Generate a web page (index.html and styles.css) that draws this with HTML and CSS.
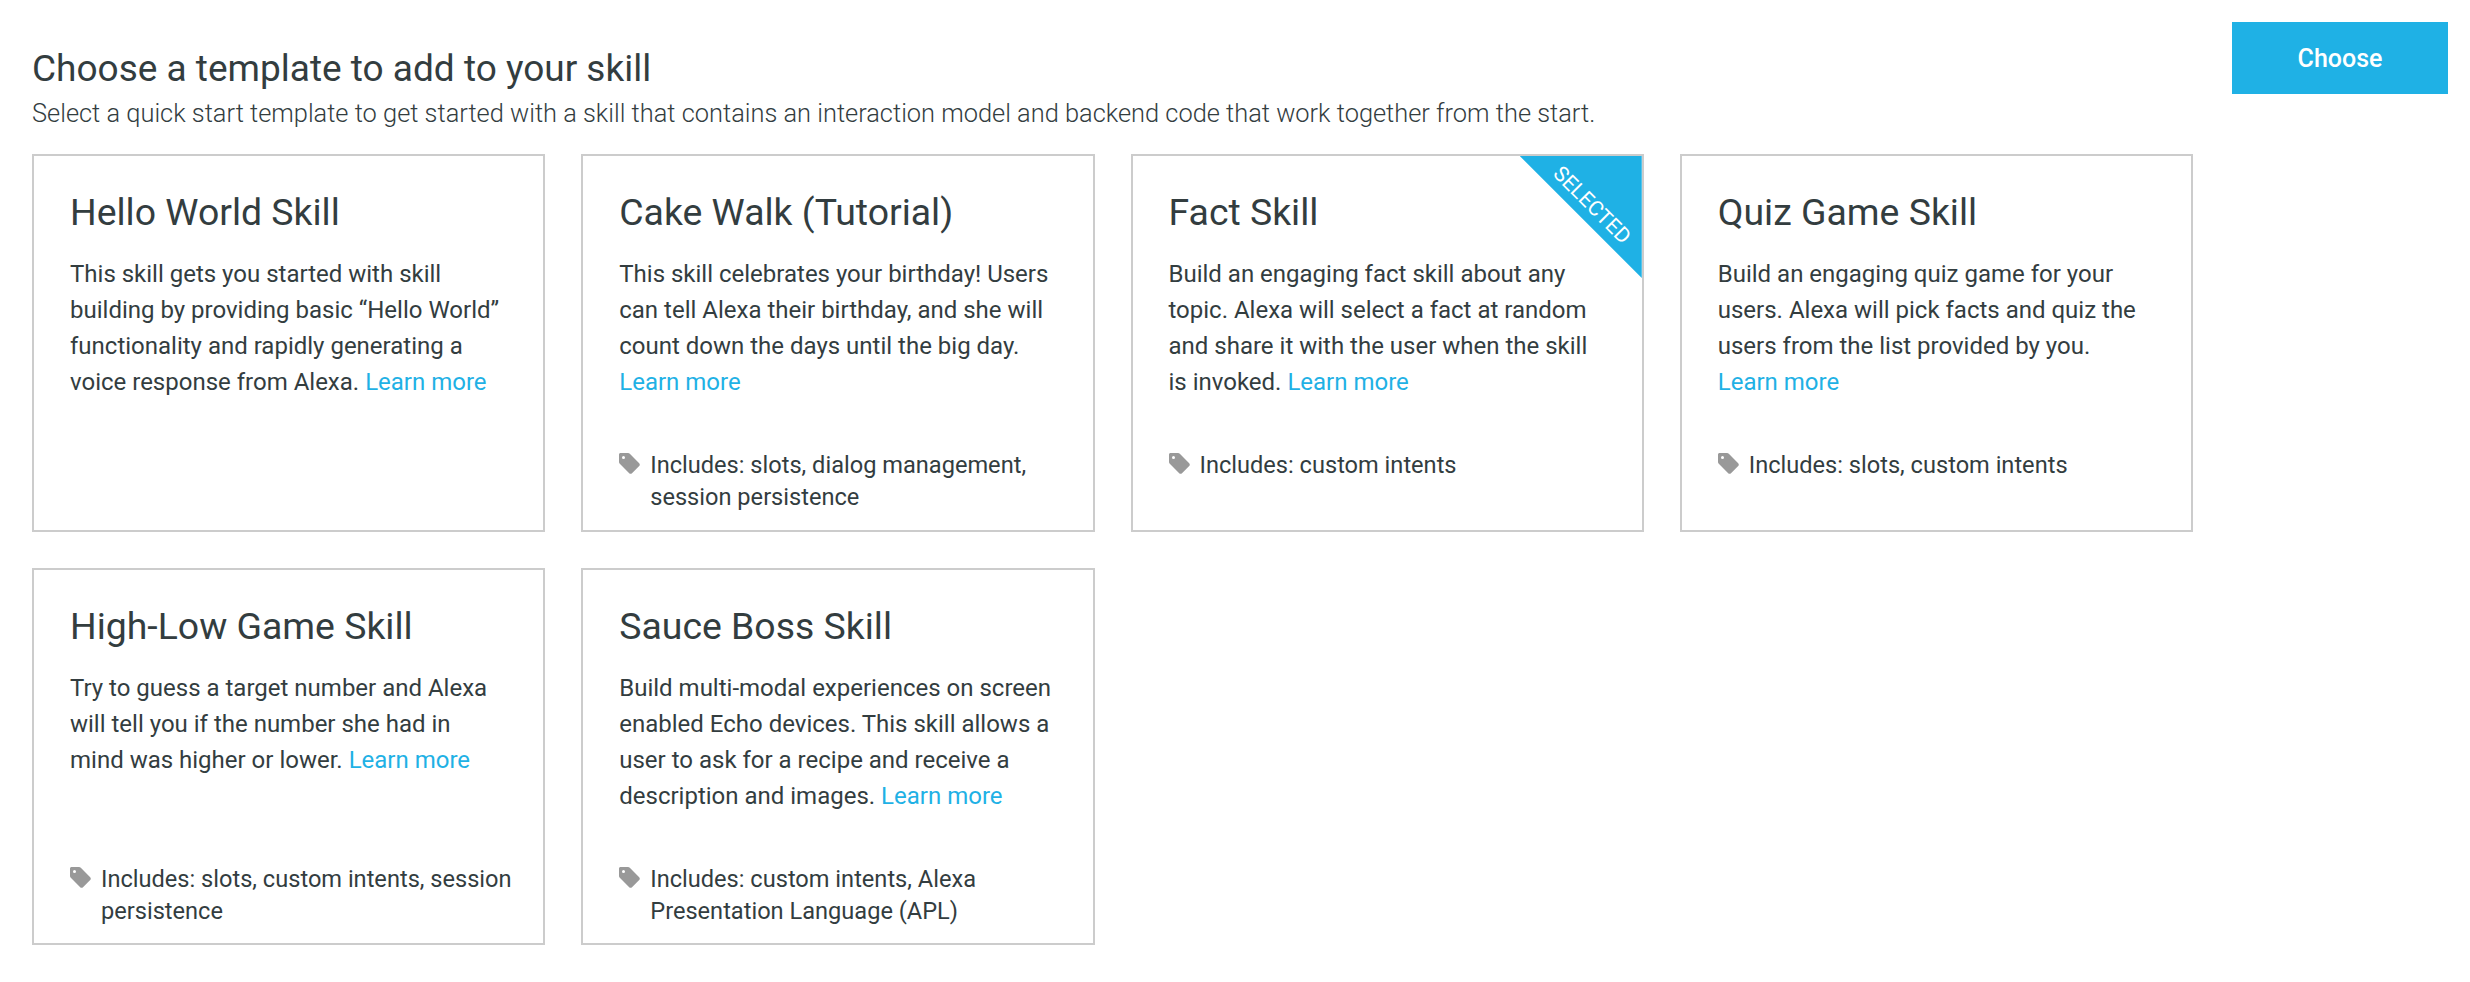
FILE: index.html
```html
<!DOCTYPE html>
<html lang="en">
<head>
    <meta charset="UTF-8">
    <title>Choose a template</title>
    <link rel="stylesheet" href="styles.css">
</head>
<body>
    <div class="page">
        <div class="content">
            <h2 class="page-title">Choose a template to add to your skill</h2>
            <p class="page-sub">Select a quick start template to get started with a skill that contains an interaction model and backend code that work together from the start.</p>

            <div class="cards">
                <div class="card">
                    <h3 class="card-title">Hello World Skill</h3>
                    <p class="card-text">This skill gets you started with skill building by providing basic “Hello World” functionality and rapidly generating a voice response from Alexa. <a href="#" class="learn">Learn more</a></p>
                </div>

                <div class="card">
                    <h3 class="card-title">Cake Walk (Tutorial)</h3>
                    <p class="card-text">This skill celebrates your birthday! Users can tell Alexa their birthday, and she will count down the days until the big day. <a href="#" class="learn">Learn more</a></p>
                    <div class="includes">
                        <svg class="tag" viewBox="0 0 21 21"><path d="M1.500 0H9c.7 0 1.300.3 1.800.8l9.400 9.400c.8.8.8 2 0 2.800l-7.200 7.200c-.8.8-2 .8-2.800 0L.8 10.800C.3 10.300 0 9.700 0 9V1.500C0 .7.7 0 1.500 0zM4.500 3A1.500 1.500 0 1 0 4.500 6 1.500 1.500 0 1 0 4.500 3z" fill-rule="evenodd"/></svg>
                        <span>Includes: slots, dialog management, session persistence</span>
                    </div>
                </div>

                <div class="card selected">
                    <div class="ribbon"><span class="ribbon-text">SELECTED</span></div>
                    <h3 class="card-title">Fact Skill</h3>
                    <p class="card-text">Build an engaging fact skill about any topic. Alexa will select a fact at random and share it with the user when the skill is invoked. <a href="#" class="learn">Learn more</a></p>
                    <div class="includes">
                        <svg class="tag" viewBox="0 0 21 21"><path d="M1.500 0H9c.7 0 1.300.3 1.800.8l9.400 9.400c.8.8.8 2 0 2.800l-7.200 7.200c-.8.8-2 .8-2.800 0L.8 10.800C.3 10.300 0 9.700 0 9V1.500C0 .7.7 0 1.500 0zM4.500 3A1.500 1.500 0 1 0 4.500 6 1.500 1.500 0 1 0 4.500 3z" fill-rule="evenodd"/></svg>
                        <span>Includes: custom intents</span>
                    </div>
                </div>

                <div class="card">
                    <h3 class="card-title">Quiz Game Skill</h3>
                    <p class="card-text">Build an engaging quiz game for your users. Alexa will pick facts and quiz the users from the list provided by you. <a href="#" class="learn">Learn more</a></p>
                    <div class="includes">
                        <svg class="tag" viewBox="0 0 21 21"><path d="M1.500 0H9c.7 0 1.300.3 1.800.8l9.400 9.400c.8.8.8 2 0 2.800l-7.200 7.200c-.8.8-2 .8-2.800 0L.8 10.800C.3 10.300 0 9.700 0 9V1.500C0 .7.7 0 1.500 0zM4.500 3A1.500 1.500 0 1 0 4.500 6 1.500 1.500 0 1 0 4.500 3z" fill-rule="evenodd"/></svg>
                        <span>Includes: slots, custom intents</span>
                    </div>
                </div>

                <div class="card">
                    <h3 class="card-title">High-Low Game Skill</h3>
                    <p class="card-text">Try to guess a target number and Alexa will tell you if the number she had in mind was higher or lower. <a href="#" class="learn">Learn more</a></p>
                    <div class="includes">
                        <svg class="tag" viewBox="0 0 21 21"><path d="M1.500 0H9c.7 0 1.300.3 1.800.8l9.400 9.400c.8.8.8 2 0 2.800l-7.200 7.200c-.8.8-2 .8-2.800 0L.8 10.800C.3 10.300 0 9.700 0 9V1.500C0 .7.7 0 1.500 0zM4.500 3A1.500 1.500 0 1 0 4.500 6 1.500 1.500 0 1 0 4.500 3z" fill-rule="evenodd"/></svg>
                        <span>Includes: slots, custom intents, session persistence</span>
                    </div>
                </div>

                <div class="card">
                    <h3 class="card-title">Sauce Boss Skill</h3>
                    <p class="card-text">Build multi-modal experiences on screen enabled Echo devices. This skill allows a user to ask for a recipe and receive a description and images. <a href="#" class="learn">Learn more</a></p>
                    <div class="includes">
                        <svg class="tag" viewBox="0 0 21 21"><path d="M1.500 0H9c.7 0 1.300.3 1.800.8l9.400 9.400c.8.8.8 2 0 2.800l-7.200 7.200c-.8.8-2 .8-2.800 0L.8 10.800C.3 10.300 0 9.700 0 9V1.500C0 .7.7 0 1.500 0zM4.500 3A1.500 1.500 0 1 0 4.500 6 1.500 1.500 0 1 0 4.500 3z" fill-rule="evenodd"/></svg>
                        <span>Includes: custom intents, Alexa Presentation Language (APL)</span>
                    </div>
                </div>
            </div>
        </div>

        <button class="choose-btn">Choose</button>
    </div>
</body>
</html>
```

FILE: styles.css
```css
body {
    margin: 0;
    background-color: #fff;
    color: #333d3f;
    font-family: Roboto, sans-serif;
}

.page {
    display: flex;
    align-items: flex-start;
    gap: 39px;
    padding: 22px 22px 0 32px;
}

.content {
    width: 2161px;
}

.page-title {
    margin: 25px 0 0;
    font-size: 37px;
    line-height: 44px;
    font-weight: 400;
}

.page-sub {
    margin: 0 0 19px;
    font-size: 25.4px;
    line-height: 44px;
    font-weight: 300;
}

.cards {
    display: grid;
    grid-template-columns: repeat(4, 1fr);
    grid-auto-rows: 377.5px;
    gap: 36px;
}

.card {
    position: relative;
    box-sizing: border-box;
    padding: 33px 36px 0;
    border: 2px solid #ccc;
}

.card-title {
    margin: 0 0 21px;
    font-size: 37.4px;
    line-height: 46px;
    font-weight: 400;
}

.card-text {
    margin: 0 0 49px;
    height: 144px;
    font-size: 24px;
    line-height: 36px;
}

.learn {
    color: #1fb1e5;
    text-decoration: none;
}

.includes {
    display: flex;
    gap: 10px;
    margin-right: -6px;
    font-size: 23.6px;
    line-height: 32px;
}

.tag {
    flex: none;
    width: 21px;
    height: 21px;
    margin-top: 4px;
    fill: #999;
}

.ribbon {
    position: absolute;
    top: 0;
    right: 0;
    width: 122px;
    height: 122px;
    background: #1fb1e5;
    clip-path: polygon(0 0, 100% 0, 100% 100%);
}

.ribbon-text {
    position: absolute;
    top: 38px;
    right: -10px;
    width: 120px;
    transform: rotate(45deg);
    color: #fff;
    font-size: 21px;
    line-height: 22px;
    text-align: center;
}

.choose-btn {
    flex: none;
    width: 216px;
    height: 72px;
    border: none;
    background: #1fb1e5;
    color: #fff;
    font-family: Roboto, sans-serif;
    font-size: 25px;
    font-weight: 500;
}
```
